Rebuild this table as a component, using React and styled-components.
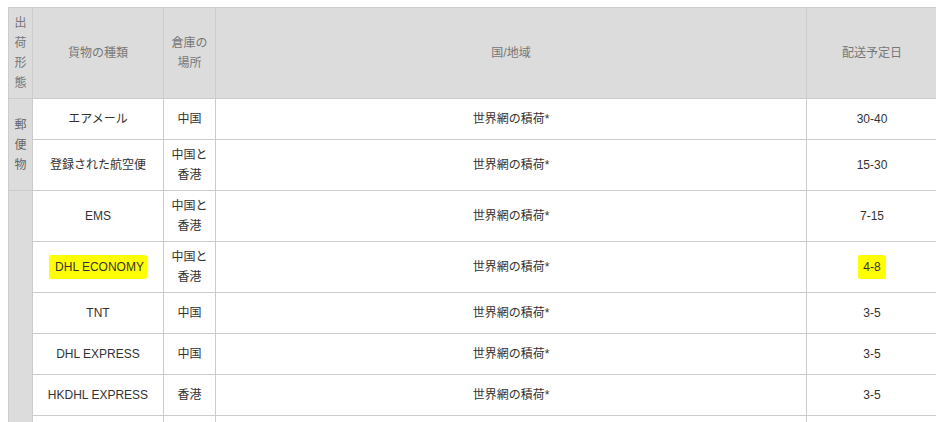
import React from 'react';
import styled, { createGlobalStyle } from 'styled-components';

const GlobalStyle = createGlobalStyle`
  body {
    margin: 7px 8px;
    background: #fff;
    font-family: "Liberation Sans", Arial, "Noto Sans CJK JP", sans-serif;
    font-size: 12px;
    color: #333;
  }
`;

const Table = styled.table`
  width: 930px;
  table-layout: fixed;
  border-collapse: collapse;
  line-height: 20px;
`;

const Th = styled.th`
  background: #dcdcdc;
  color: #777;
  font-weight: normal;
  border: 1px solid #ccc;
  padding: 5px;
  text-align: center;
  vertical-align: middle;
`;

const Td = styled.td`
  border: 1px solid #ccc;
  padding: 5px;
  height: 30px;
  text-align: center;
  vertical-align: middle;
  background: ${(p) => (p.$side ? '#dcdcdc' : '#fff')};
  color: ${(p) => (p.$side ? '#666' : '#333')};
`;

const Marker = styled.span`
  display: inline-block;
  background: #ffff00;
  padding: 2px ${(p) => p.$right || 3}px 2px ${(p) => p.$left || 6}px;
  border-radius: 1px 4px 2px 3px / 3px 2px 4px 1px;
`;

const rows = [
  { name: 'エアメール', wh: '中国', days: '30-40' },
  { name: '登録された航空便', wh: '中国と香港', days: '15-30' },
  { name: 'EMS', wh: '中国と香港', days: '7-15' },
  { name: 'DHL ECONOMY', wh: '中国と香港', days: '4-8', mark: true },
  { name: 'TNT', wh: '中国', days: '3-5' },
  { name: 'DHL EXPRESS', wh: '中国', days: '3-5' },
  { name: 'HKDHL EXPRESS', wh: '香港', days: '3-5' },
  { name: '', wh: '', days: '', blank: true },
];

const App = () => {
  return (
    <>
      <GlobalStyle />
      <Table>
        <colgroup>
          <col style={{ width: 24 }} />
          <col style={{ width: 131 }} />
          <col style={{ width: 52 }} />
          <col style={{ width: 591 }} />
          <col style={{ width: 131 }} />
        </colgroup>
        <thead>
          <tr>
            <Th>出荷形態</Th>
            <Th>貨物の種類</Th>
            <Th>倉庫の場所</Th>
            <Th>国/地域</Th>
            <Th>配送予定日</Th>
          </tr>
        </thead>
        <tbody>
          {rows.map((r, i) => (
            <tr key={i}>
              {i === 0 && (
                <Td $side rowSpan={2}>
                  郵便物
                </Td>
              )}
              {i === 2 && <Td $side rowSpan={rows.length - 2}></Td>}
              <Td>{r.mark ? <Marker>{r.name}</Marker> : r.name}</Td>
              <Td>{r.wh}</Td>
              <Td>{r.blank ? '' : '世界網の積荷*'}</Td>
              <Td>{r.mark ? <Marker $left={5} $right={5}>{r.days}</Marker> : r.days}</Td>
            </tr>
          ))}
        </tbody>
      </Table>
    </>
  );
};

export default App;
